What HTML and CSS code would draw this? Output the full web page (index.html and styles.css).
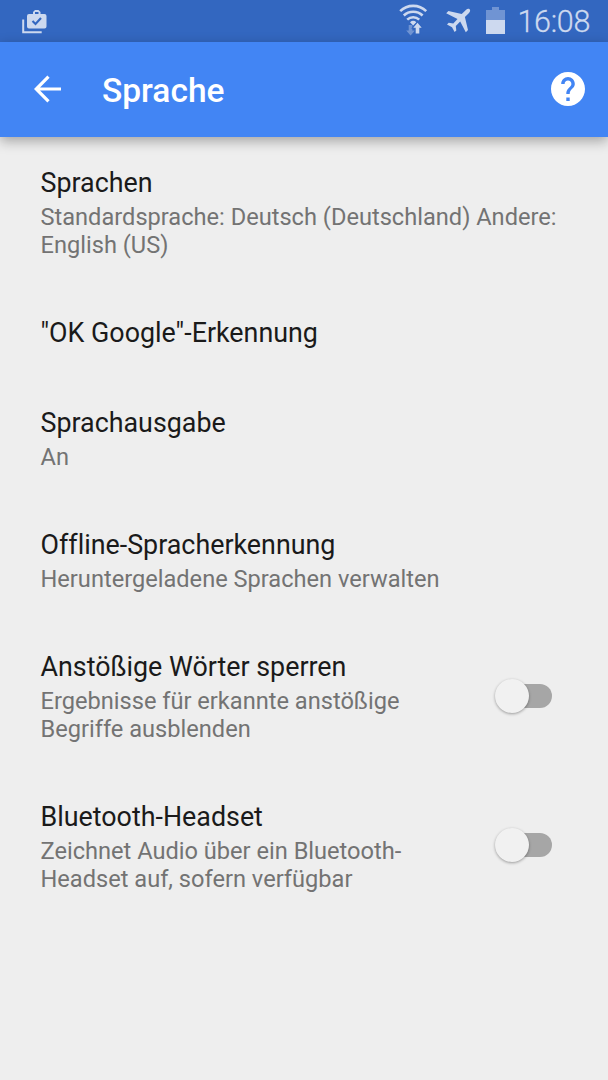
FILE: index.html
```
<!DOCTYPE html>
<html lang="de">
  <head>
    <meta charset="utf-8">
    <title>Sprache</title>
    <link rel="stylesheet" href="styles.css">
  </head>
  <body>
    <div class="status-bar">
      <svg class="icon-work" width="26" height="26" viewBox="0 0 26 26">
        <path d="M1.200 10.500v12.800h18.500" fill="none" stroke="currentColor" stroke-width="2"/>
        <path fill="currentColor" fill-rule="evenodd" d="M11 5V3L13 1h3.500l2 2v2H22.500a2 2 0 0 1 2 2v10.500a2 2 0 0 1-2 2H7a2 2 0 0 1-2-2V7a2 2 0 0 1 2-2zm2 0h3.500V3H13z"/>
        <path class="cut" d="M10.500 12l3 3 5.500-6" fill="none" stroke-width="2.100"/>
      </svg>
      <div class="status-icons">
        <svg class="icon-wifi" width="30" height="32" viewBox="0 0 30 32">
          <g fill="none" stroke="currentColor" stroke-width="2.600">
            <path d="M1.200 7.200a18.500 18.500 0 0 1 26 0"/>
            <path d="M4.800 11.500a13.500 13.500 0 0 1 18.800 0"/>
            <path d="M8.200 15.600a9 9 0 0 1 12 0"/>
          </g>
          <path fill="currentColor" d="M11 18.200a5 5 0 0 1 6.400 0l-3.200 3.200z"/>
          <path fill="currentColor" opacity=".4" d="M9.700 21h3.600v5.500H16l-4.400 5-4.400-5h2.500z"/>
          <path class="halo" fill="currentColor" d="M18.500 18.700l4.200 5h-2.400v5.800h-3.600v-5.800h-2.400z"/>
        </svg>
        <svg class="icon-plane" width="26" height="26" viewBox="0 0 26 26">
          <path fill="currentColor" d="M24.600 1.200c1 1 .5 2.600-.6 3.700l-4.100 4.200 3.100 13-2.200 2.200-5.600-10.700-4.400 4.400.5 4.400-1.700 1.700-2.600-4.800L2 16.500l1.700-1.700 4.600.6 4.200-4.400L1.200 5.300 3.400 3.100l13.300 3 4.200-4.200c1.100-1.100 2.700-1.700 3.700-.7z"/>
        </svg>
        <svg class="icon-battery" width="19" height="27" viewBox="0 0 19 27">
          <path fill="currentColor" opacity=".4" d="M0 3h6V0h7v3h6v10H0z"/>
          <path fill="currentColor" d="M0 13h19v14H0z"/>
        </svg>
        <span class="clock">16:08</span>
      </div>
    </div>

    <div class="toolbar">
      <svg class="back" width="28" height="28" viewBox="0 0 28 28">
        <path d="M27 14H3M14.500 1.700L2.200 14l12.300 12.300" fill="none" stroke="currentColor" stroke-width="3.200"/>
      </svg>
      <h1>Sprache</h1>
      <svg class="help" width="34" height="34" viewBox="2 2 20 20">
        <path fill="currentColor" d="M12 2C6.480 2 2 6.480 2 12s4.480 10 10 10 10-4.480 10-10S17.520 2 12 2zm1 17h-2v-2h2v2zm2.070-7.750l-.9.920C13.450 12.900 13 13.500 13 15h-2v-.5c0-1.100.450-2.100 1.170-2.830l1.240-1.260c.370-.360.590-.860.590-1.410 0-1.100-.9-2-2-2s-2 .9-2 2H8c0-2.210 1.790-4 4-4s4 1.790 4 4c0 .880-.360 1.680-.930 2.250z"/>
      </svg>
    </div>

    <div class="settings">
      <div class="item">
        <div class="text">
          <h2>Sprachen</h2>
          <p>Standardsprache: Deutsch (Deutschland) Andere: English (US)</p>
        </div>
      </div>
      <div class="item">
        <div class="text">
          <h2>"OK Google"-Erkennung</h2>
        </div>
      </div>
      <div class="item">
        <div class="text">
          <h2>Sprachausgabe</h2>
          <p>An</p>
        </div>
      </div>
      <div class="item">
        <div class="text">
          <h2>Offline-Spracherkennung</h2>
          <p>Heruntergeladene Sprachen verwalten</p>
        </div>
      </div>
      <div class="item">
        <div class="text">
          <h2>Anstößige Wörter sperren</h2>
          <p>Ergebnisse für erkannte anstößige Begriffe ausblenden</p>
        </div>
        <div class="switch"><div class="thumb"></div></div>
      </div>
      <div class="item">
        <div class="text">
          <h2>Bluetooth-Headset</h2>
          <p>Zeichnet Audio über ein Bluetooth-Headset auf, sofern verfügbar</p>
        </div>
        <div class="switch"><div class="thumb"></div></div>
      </div>
    </div>
  </body>
</html>
```
FILE: styles.css
```
* {
  box-sizing: border-box;
}
body {
  margin: 0;
  min-height: 1080px;
  background: #eeeeee;
  font-family: Roboto, sans-serif;
}
h1, h2, p {
  margin: 0;
}
svg {
  display: block;
  flex: none;
}

.status-bar {
  display: flex;
  justify-content: space-between;
  height: 42px;
  padding: 0 18px 0 22px;
  background: #3367c0;
  color: #cdd9ef;
}
.icon-work {
  margin-top: 9px;
}
.icon-work .cut {
  stroke: #3367c0;
}
.status-icons {
  display: flex;
}
.icon-wifi {
  margin: 4px 16px 0 0;
}
.icon-wifi .halo {
  stroke: #3367c0;
  stroke-width: 2;
  paint-order: stroke;
}
.icon-plane {
  margin: 8px 15px 0 0;
}
.icon-battery {
  margin: 7px 12px 0 0;
}
.clock {
  font-size: 30.500px;
  font-weight: 300;
  line-height: 44px;
  letter-spacing: -0.300px;
  -webkit-text-stroke: 0.300px #cdd9ef;
}

.toolbar {
  position: relative;
  display: flex;
  align-items: center;
  height: 95px;
  padding: 0 23px 0 34px;
  background: #4285f4;
  color: #fff;
  box-shadow: 0 4px 12px rgba(0, 0, 0, 0.32);
}
.toolbar .back {
  margin-top: -1px;
}
.toolbar h1 {
  margin-left: 40px;
  padding-top: 2px;
  font-size: 33.500px;
  font-weight: 500;
}
.toolbar .help {
  margin: -1px 0.500px 0 auto;
}

.item {
  display: flex;
  align-items: center;
  justify-content: space-between;
  padding: 29px 40.500px;
}
.item:first-child {
  padding-top: 30.200px;
}
.text h2 {
  font-size: 26.850px;
  font-weight: 400;
  line-height: 32px;
  color: #1a1a1a;
  font-variant-ligatures: none;
}
.text p {
  margin: 5.300px 0 -1px;
  font-size: 23.620px;
  line-height: 27.700px;
  color: #737373;
}
.switch {
  flex: none;
  width: 57px;
  margin: -2px 16px 0 55px;
  padding-left: 6px;
}
.switch::before {
  content: "";
  display: block;
  height: 24px;
  border-radius: 12px;
  background: #a6a6a6;
}
.thumb {
  width: 34px;
  height: 34px;
  margin: -29px 0 -5px -6px;
  position: relative;
  border-radius: 50%;
  background: #f1f1f1;
  box-shadow: 0 1px 3px rgba(0, 0, 0, 0.35);
}
```
